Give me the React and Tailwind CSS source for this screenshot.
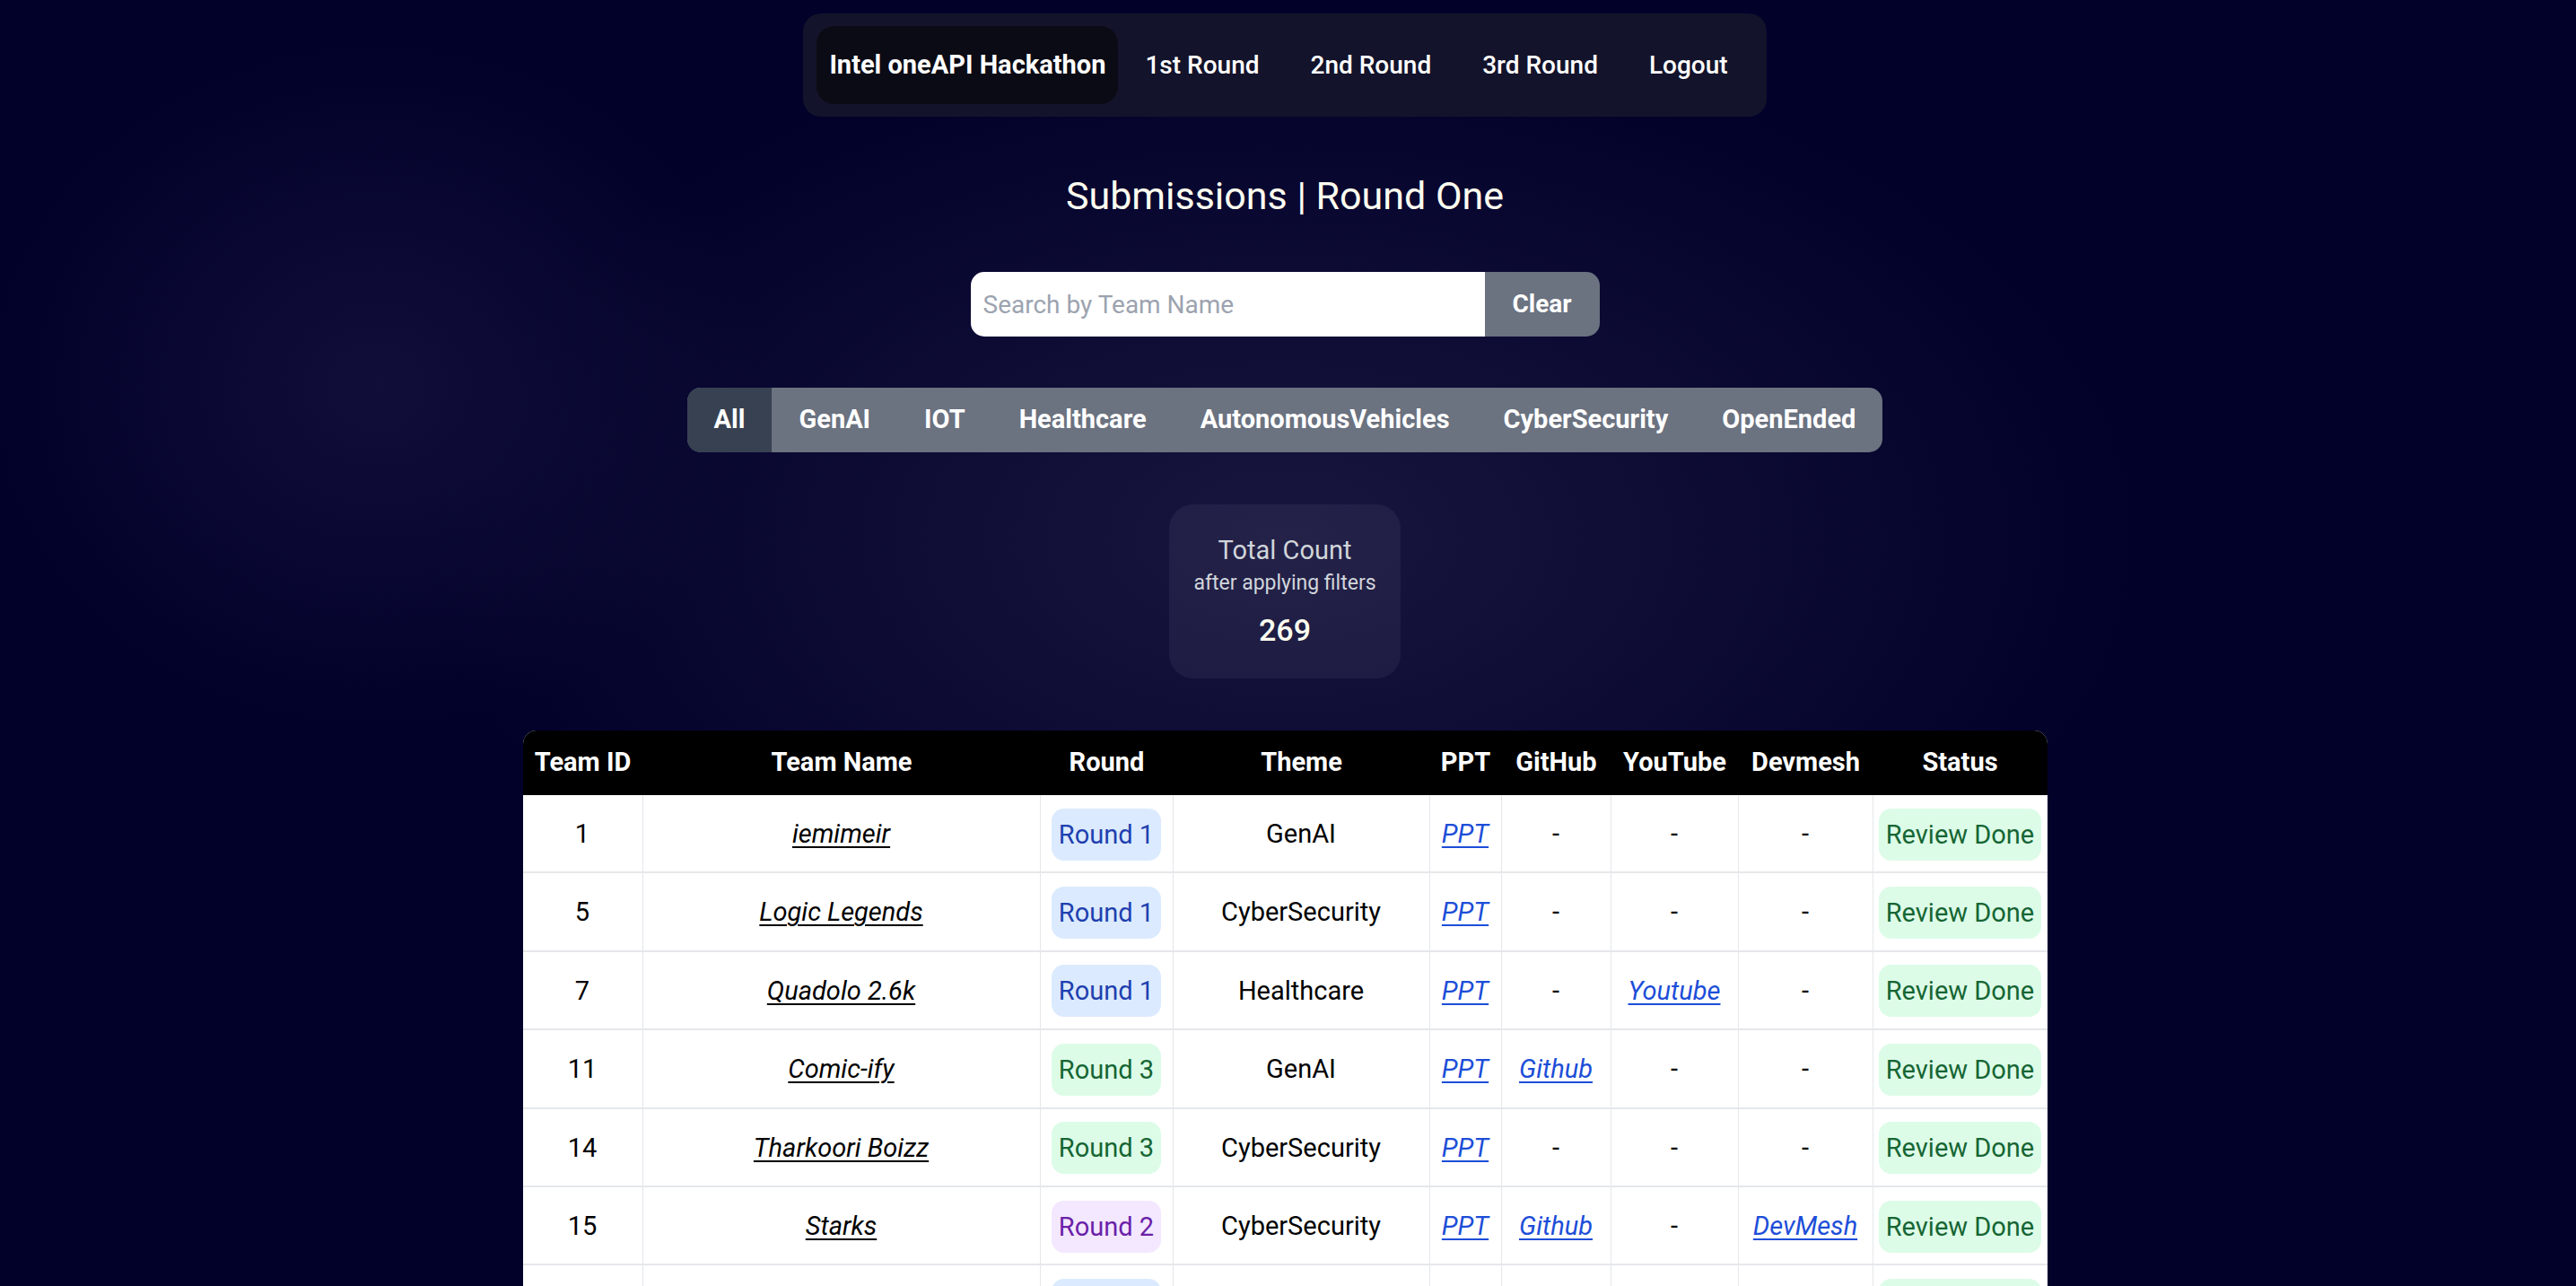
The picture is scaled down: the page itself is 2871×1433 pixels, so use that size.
import React from "react";

const rows = [
  { id: 1, name: "iemimeir", round: 1, theme: "GenAI", ppt: true },
  { id: 5, name: "Logic Legends", round: 1, theme: "CyberSecurity", ppt: true },
  { id: 7, name: "Quadolo 2.6k", round: 1, theme: "Healthcare", ppt: true, youtube: true },
  { id: 11, name: "Comic-ify", round: 3, theme: "GenAI", ppt: true, github: true },
  { id: 14, name: "Tharkoori Boizz", round: 3, theme: "CyberSecurity", ppt: true },
  { id: 15, name: "Starks", round: 2, theme: "CyberSecurity", ppt: true, github: true, devmesh: true },
  { id: 16, name: "Byte Busters", round: 1, theme: "IOT", ppt: true },
  { id: 18, name: "Neural Ninjas", round: 1, theme: "GenAI", ppt: true, github: true },
  { id: 21, name: "Code Crafters", round: 2, theme: "OpenEnded", ppt: true },
];

const roundStyle = {
  1: "bg-[#dbeafe] text-[#1e40af]",
  2: "bg-[#f3e8ff] text-[#6b21a8]",
  3: "bg-[#dcfce7] text-[#166534]",
};

const cols = "grid grid-cols-[134px_443px_148px_286px_80px_122px_142px_150px_194px]";

const headers = ["Team ID", "Team Name", "Round", "Theme", "PPT", "GitHub", "YouTube", "Devmesh", "Status"];

function Cell({ children, last }) {
  return (
    <div className={`flex items-center justify-center pt-[2px] ${last ? "" : "border-r border-[#e5e7eb]"}`}>
      {children}
    </div>
  );
}

function LinkText({ children }) {
  return <a className="italic underline decoration-[2px] underline-offset-[4px] text-[#1d4ed8]">{children}</a>;
}

export default function App() {
  return (
    <div className="min-h-screen w-full bg-[#02012a] bg-[radial-gradient(ellipse_430px_380px_at_420px_430px,#110f3a_0%,transparent_100%),radial-gradient(ellipse_950px_560px_at_1430px_600px,#18163f_0%,transparent_100%)] font-['Roboto',sans-serif] flex flex-col items-center pr-[7px] pb-[80px]">
      {/* Nav */}
      <nav className="mt-[15px] h-[115px] flex items-center gap-[3px] rounded-[20px] bg-[#13132b] pl-[15px] pr-[16px]">
        <a className="h-[87px] flex items-center rounded-[20px] bg-[#0b0b15] px-[14px] text-[29px] font-bold text-white">
          Intel oneAPI Hackathon
        </a>
        {["1st Round", "2nd Round", "3rd Round", "Logout"].map((t) => (
          <a key={t} className="h-[87px] flex items-center px-[27px] text-[28px] font-medium text-white">
            {t}
          </a>
        ))}
      </nav>

      {/* Title */}
      <h1 className="mt-[60px] text-[43px] leading-[56px] font-normal text-[#fffff0]">
        Submissions | Round One
      </h1>

      {/* Search */}
      <div className="mt-[57px] flex h-[72px] overflow-hidden rounded-[15px]">
        <input
          className="w-[573px] h-full bg-white pl-[14px] text-[28px] text-black placeholder:text-[#9ca3af] outline-none font-['Roboto',sans-serif]"
          placeholder="Search by Team Name"
        />
        <button className="w-[128px] h-full bg-[#6b7280] text-[28px] font-bold text-white">Clear</button>
      </div>

      {/* Categories */}
      <div className="mt-[57px] flex h-[72px] overflow-hidden rounded-[15px] bg-[#6b7280]">
        {["All", "GenAI", "IOT", "Healthcare", "AutonomousVehicles", "CyberSecurity", "OpenEnded"].map((c, i) => (
          <button
            key={c}
            className={`h-full px-[30px] text-[29px] font-bold text-white ${i === 0 ? "bg-[#374151]" : ""}`}
          >
            {c}
          </button>
        ))}
      </div>

      {/* Count card */}
      <div className="mt-[58px] w-[258px] h-[194px] rounded-[27px] bg-white/[0.05] flex flex-col items-center pt-[29px]">
        <div className="text-[29px] leading-[44px] text-[#d1d5db]">Total Count</div>
        <div className="text-[23px] leading-[29px] text-[#d1d5db]">after applying filters</div>
        <div className="mt-[14px] text-[34px] leading-[48px] font-medium text-[#fffff0]">269</div>
      </div>

      {/* Table */}
      <div className="mt-[58px] w-[1699px] rounded-t-[15px] overflow-hidden bg-white text-[29px] text-black">
        <div className={`${cols} h-[72px] bg-black text-white font-bold`}>
          {headers.map((h) => (
            <div key={h} className="flex items-center justify-center">
              {h}
            </div>
          ))}
        </div>
        {rows.map((r) => (
          <div key={r.id} className={`${cols} h-[87.4px] border-b-2 border-[#e5e7eb]`}>
            <Cell>{r.id}</Cell>
            <Cell>
              <a className="italic underline decoration-[2px] underline-offset-[4px] text-black">{r.name}</a>
            </Cell>
            <Cell>
              <span className={`rounded-[14px] px-[8px] py-[7px] leading-[44px] ${roundStyle[r.round]}`}>
                Round {r.round}
              </span>
            </Cell>
            <Cell>{r.theme}</Cell>
            <Cell>{r.ppt ? <LinkText>PPT</LinkText> : "-"}</Cell>
            <Cell>{r.github ? <LinkText>Github</LinkText> : "-"}</Cell>
            <Cell>{r.youtube ? <LinkText>Youtube</LinkText> : "-"}</Cell>
            <Cell>{r.devmesh ? <LinkText>DevMesh</LinkText> : "-"}</Cell>
            <Cell last>
              <span className="rounded-[14px] px-[8px] py-[7px] leading-[44px] bg-[#dcfce7] text-[#166534]">
                Review Done
              </span>
            </Cell>
          </div>
        ))}
      </div>
    </div>
  );
}
